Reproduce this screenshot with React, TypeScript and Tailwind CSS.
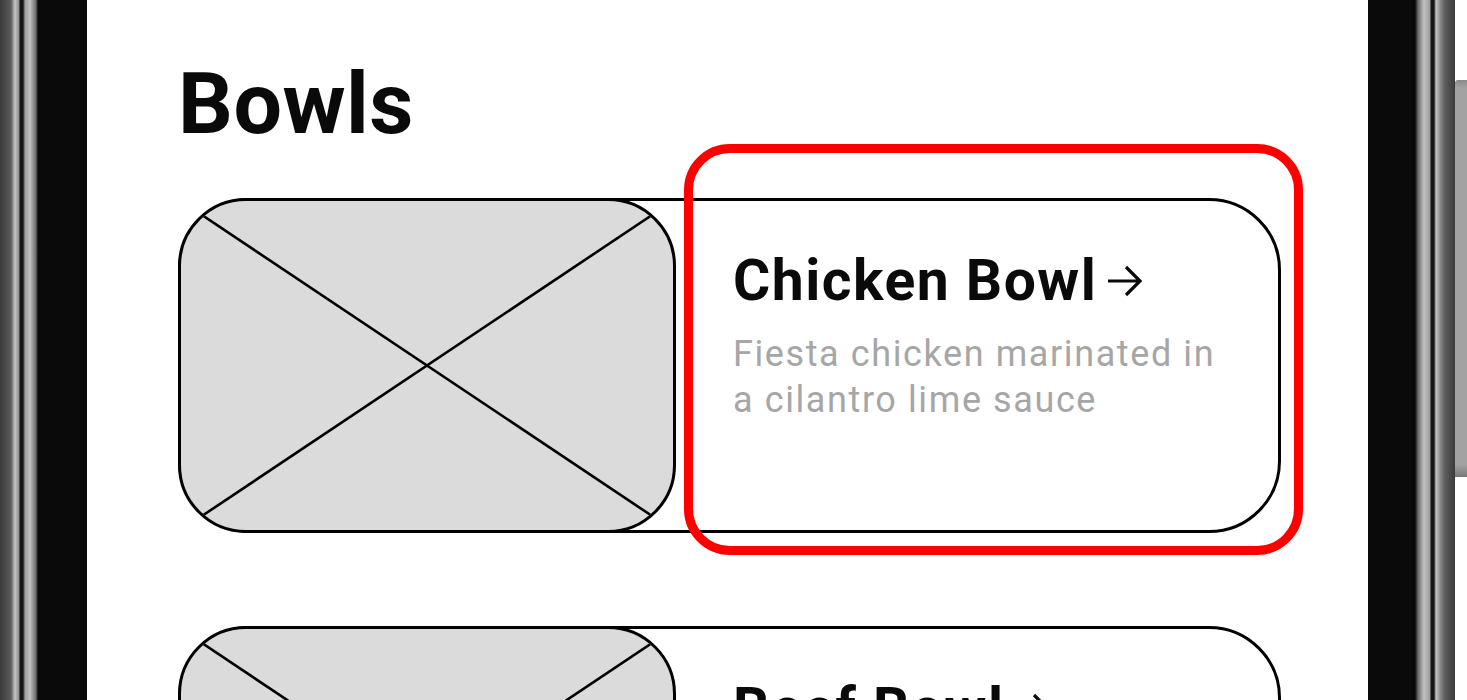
import React from 'react';

interface Bowl {
  name: string,
  desc: string,
  selected?: boolean,
}

const bowls: Array<Bowl> = [
  { name: 'Chicken Bowl', desc: 'Fiesta chicken marinated in a cilantro lime sauce', selected: true },
  { name: 'Beef Bowl', desc: 'Grilled steak with peppers and onions' },
];

function Arrow() {
  return (
    <svg width="36" height="32" viewBox="0 0 36 32" className="ml-[10px] shrink-0">
      <path d="M1 16 H33 M19 2 L33 16 L19 30" fill="none" stroke="#0a0a0a" strokeWidth="3.2" />
    </svg>
  );
}

function Placeholder() {
  return (
    <div className="-my-[3px] -ml-[3px] w-[498px] shrink-0 overflow-hidden rounded-[68px] border-[3px] border-black bg-[#dbdbdb]">
      <svg className="h-full w-full" viewBox="0 0 100 100" preserveAspectRatio="none">
        <line x1="0" y1="0" x2="100" y2="100" stroke="#000" strokeWidth="2.6" vectorEffect="non-scaling-stroke" />
        <line x1="100" y1="0" x2="0" y2="100" stroke="#000" strokeWidth="2.6" vectorEffect="non-scaling-stroke" />
      </svg>
    </div>
  );
}

function BowlCard({ bowl }: { bowl: Bowl }) {
  return (
    <div className="relative flex h-[335px] shrink-0 rounded-[72px] border-[3px] border-black">
      <Placeholder />
      <div className="flex flex-col pl-[57px] pt-[51px]">
        <div className="flex items-center">
          <h2 className="text-[57px] font-bold leading-none tracking-[1.5px] text-[#0a0a0a]">{bowl.name}</h2>
          <Arrow />
        </div>
        <p className="mt-[22px] max-w-[505px] text-[36px] leading-[46px] tracking-[1.6px] text-[#a6a6a6]">{bowl.desc}</p>
      </div>
      {/* highlight */}
      {bowl.selected && (
        <div className="pointer-events-none absolute -top-[57px] -right-[25px] -bottom-[25px] left-[503px] rounded-[46px] border-[9px] border-[#ff0000]"></div>
      )}
    </div>
  );
}

export default function App() {
  return (
    <div className="flex h-[700px] w-full overflow-hidden bg-white font-['Roboto',sans-serif]">
      {/* left frame */}
      <div className="w-[87px] shrink-0 bg-[linear-gradient(to_right,#3a3a3a_0px,#5c5c5c_11px,#c6c6c6_15px,#8c8c8c_19px,#151515_20px,#151515_23px,#9c9c9c_25px,#c2c2c2_30px,#6a6a6a_36px,#0a0a0a_38px,#0a0a0a_87px)]"></div>

      {/* screen */}
      <div className="flex flex-1 flex-col pl-[91px] pr-[87px] pt-[61px]">
        <h1 className="text-[86px] font-bold leading-none tracking-[0.5px] text-[#0a0a0a]">Bowls</h1>
        <div className="mt-[51px] flex flex-col gap-[93px]">
          {bowls.map((b) => (
            <BowlCard key={b.name} bowl={b} />
          ))}
        </div>
      </div>

      {/* right frame */}
      <div className="w-[87px] shrink-0 bg-[linear-gradient(to_right,#0a0a0a_0px,#0a0a0a_47px,#6a6a6a_50px,#c2c2c2_56px,#9c9c9c_62px,#151515_63px,#151515_66px,#c6c6c6_68px,#8c8c8c_72px,#5c5c5c_77px,#3a3a3a_87px)]"></div>
      <div className="w-[12px] shrink-0 pt-[80px]">
        <div className="h-[397px] rounded-tl-[3px] bg-[linear-gradient(to_bottom,#8a8a8a_0px,#a2a2a2_8px,#a2a2a2_385px,#777_397px)]"></div>
      </div>
    </div>
  );
}
